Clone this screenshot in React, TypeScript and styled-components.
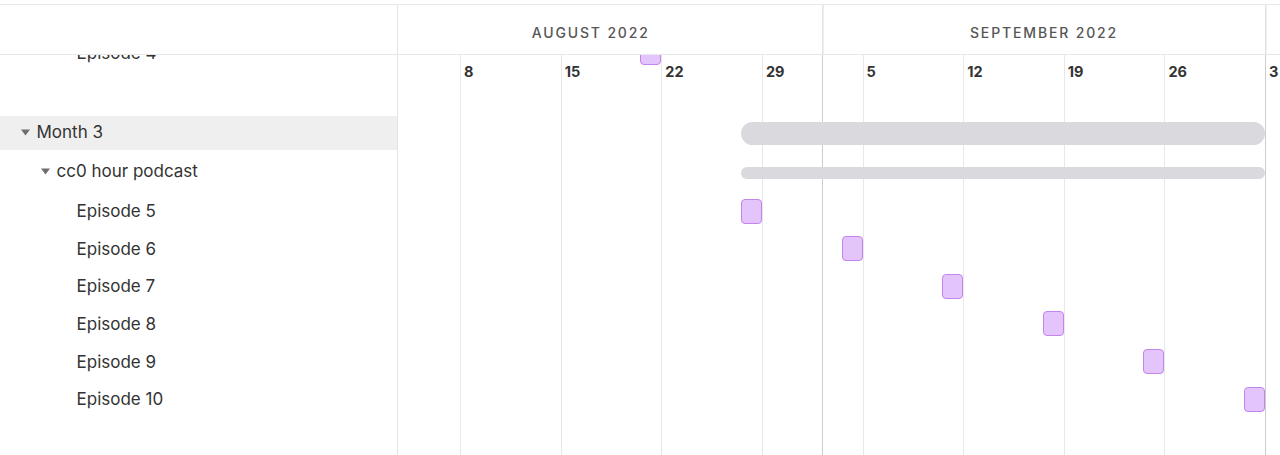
import React, { useLayoutEffect, useRef } from 'react';
import styled, { createGlobalStyle } from 'styled-components';

const GlobalStyle = createGlobalStyle`
  html, body { margin: 0; padding: 0; background: #ffffff; }
  body {
    font-family: Inter, "Noto Sans", sans-serif;
    color: #333333;
    overflow: hidden;
    -webkit-font-smoothing: antialiased;
  }
  * { box-sizing: border-box; }
`;

/* ---------- scale & data ---------- */
const DAY = 100.625 / 7;
const SIDEBAR_W = 398; // incl. 1px border
const SCROLL_X = 38.625; // canvas px hidden behind the sidebar
const SCROLL_Y = 210;
const VIEW_START = Date.UTC(2022, 7, 1);

const dayIdx = (m: number, d: number) =>
  Math.round((Date.UTC(2022, m - 1, d) - VIEW_START) / 86400000);
const xOf = (idx: number) => idx * DAY - SCROLL_X;

const MS_W = 21;
const MS_H = 25;

const GROUP_H = 36;
const PROJECT_H = 40;
const TASK_H = 37.6;
const GAP_H = 45;
const END_H = 80;

const months = [
  { label: 'AUGUST 2022', width: 463.625 },
  { label: 'SEPTEMBER 2022', width: 443 },
  { label: 'OCTOBER 2022', width: 460 },
];
const monthLines = [462.625, 905.625];

const weeks: { label: string; idx: number }[] = [];
for (let i = 0; i <= 10; i++) {
  const t = new Date(VIEW_START + i * 7 * 86400000);
  weeks.push({ label: String(t.getUTCDate()), idx: i * 7 });
}

type Kind = 'group' | 'project' | 'task' | 'gap';
interface GRow {
  kind: Kind;
  label?: string;
  level: number;
  start?: number;
  end?: number;
  at?: number;
}

const groups = [
  {
    label: 'Month 2',
    project: 'cc0 hour podcast',
    episodes: [
      { n: 1, d: dayIdx(8, 1) },
      { n: 2, d: dayIdx(8, 8) },
      { n: 3, d: dayIdx(8, 15) },
      { n: 4, d: dayIdx(8, 22) },
    ],
  },
  {
    label: 'Month 3',
    project: 'cc0 hour podcast',
    episodes: [
      { n: 5, d: dayIdx(8, 29) },
      { n: 6, d: dayIdx(9, 5) },
      { n: 7, d: dayIdx(9, 12) },
      { n: 8, d: dayIdx(9, 19) },
      { n: 9, d: dayIdx(9, 26) },
      { n: 10, d: dayIdx(10, 3) },
    ],
  },
];

const rows: GRow[] = [];
groups.forEach((g, gi) => {
  const first = xOf(g.episodes[0].d) - MS_W;
  const last = xOf(g.episodes[g.episodes.length - 1].d);
  rows.push({ kind: 'group', label: g.label, level: 0, start: first, end: last });
  rows.push({ kind: 'project', label: g.project, level: 1, start: first, end: last });
  g.episodes.forEach((e) =>
    rows.push({ kind: 'task', label: `Episode ${e.n}`, level: 2, at: xOf(e.d) })
  );
  rows.push({ kind: 'gap', level: gi === groups.length - 1 ? -1 : 0 });
});

const heightOf = (r: GRow) =>
  r.kind === 'group'
    ? GROUP_H
    : r.kind === 'project'
    ? PROJECT_H
    : r.kind === 'task'
    ? TASK_H
    : r.level === -1
    ? END_H
    : GAP_H;

/* ---------- styled parts ---------- */
const Page = styled.div`
  padding-top: 4px;
  height: 455px;
`;

const Gantt = styled.div`
  height: 451px;
  border-top: 1px solid #e7e7e7;
  display: flex;
  flex-direction: column;
`;

const Header = styled.div`
  display: flex;
  height: 50px;
  flex: none;
  border-bottom: 1px solid #e7e7e7;
`;

const SidebarHead = styled.div`
  width: ${SIDEBAR_W}px;
  flex: none;
  border-right: 1px solid #e4e4e4;
`;

const Viewport = styled.div`
  flex: 1;
  overflow: hidden;
  position: relative;
`;

const MonthStrip = styled.div`
  display: flex;
  height: 100%;
`;

const MonthCell = styled.div`
  flex: none;
  height: 100%;
  border-right: 1px solid #d2d2d2;
  display: flex;
  align-items: center;
  justify-content: center;
  padding-top: 5px;
  font-size: 14px;
  font-weight: 500;
  letter-spacing: 1.85px;
  color: #565656;
  white-space: nowrap;
`;

const BodyWrap = styled.div`
  flex: 1;
  min-height: 0;
  display: flex;
  position: relative;
`;

const Scroller = styled.div`
  flex: 1;
  overflow: hidden;
`;

const Content = styled.div`
  position: relative;
`;

const GridLayer = styled.div`
  position: absolute;
  top: 0;
  bottom: 0;
  left: ${SIDEBAR_W}px;
  right: 0;
  overflow: hidden;
  pointer-events: none;
`;

const VLine = styled.div<{ $strong?: boolean }>`
  position: absolute;
  top: 0;
  bottom: 0;
  width: 1px;
  background: ${(p) => (p.$strong ? '#cdcdcd' : '#e8e8e8')};
`;

const Row = styled.div`
  display: flex;
  position: relative;
  z-index: 1;
`;

const SideCell = styled.div<{ $level: number; $kind: Kind }>`
  width: ${SIDEBAR_W}px;
  flex: none;
  border-right: 1px solid #e4e4e4;
  display: flex;
  align-items: center;
  padding-left: ${(p) => 21 + Math.max(p.$level, 0) * 20}px;
  padding-bottom: ${(p) => (p.$kind === 'group' ? 5 : p.$kind === 'project' ? 3 : 0)}px;
  background: ${(p) =>
    p.$kind === 'group'
      ? 'linear-gradient(#efefef, #efefef) top left / 100% 34px no-repeat'
      : 'transparent'};
  font-size: 17px;
  color: #333333;
  white-space: nowrap;
`;

const Toggle = styled.span`
  width: 15.5px;
  flex: none;
  display: flex;
  align-items: center;
  padding-top: 2px;
`;

const Track = styled.div`
  flex: 1;
  position: relative;
`;

const Bar = styled.div<{ $thick?: boolean }>`
  position: absolute;
  top: ${(p) => (p.$thick ? 5.5 : 15)}px;
  height: ${(p) => (p.$thick ? 23 : 12)}px;
  border-radius: 12px;
  background: #d9d9de;
`;

const Milestone = styled.div`
  position: absolute;
  top: 50%;
  width: ${MS_W}px;
  height: ${MS_H}px;
  margin-top: -${MS_H / 2}px;
  border-radius: 4px;
  background: #e4c5fb;
  border: 1.5px solid #c384ee;
`;

const WeekLabels = styled.div`
  position: absolute;
  top: 0;
  left: ${SIDEBAR_W}px;
  right: 0;
  height: 34px;
  overflow: hidden;
  pointer-events: none;
  z-index: 2;
`;

const WeekLabel = styled.span`
  position: absolute;
  top: 0;
  line-height: 34px;
  font-size: 14.5px;
  font-weight: 700;
  color: #333333;
`;

const Caret = () => (
  <svg width="9" height="7" viewBox="0 0 9 7" aria-hidden>
    <polygon points="0,0.5 9,0.5 4.5,6.5" fill="#6e6e6e" />
  </svg>
);

export default function App() {
  const scroller = useRef<HTMLDivElement>(null);
  useLayoutEffect(() => {
    if (scroller.current) scroller.current.scrollTop = SCROLL_Y;
  }, []);

  return (
    <Page>
      <GlobalStyle />
      <Gantt>
        <Header>
          <SidebarHead />
          <Viewport>
            <MonthStrip style={{ transform: `translateX(${-SCROLL_X}px)` }}>
              {months.map((m) => (
                <MonthCell key={m.label} style={{ width: m.width }}>
                  {m.label}
                </MonthCell>
              ))}
            </MonthStrip>
          </Viewport>
        </Header>
        <BodyWrap>
          <Scroller ref={scroller}>
            <Content>
              <GridLayer>
                {weeks.map((w) => (
                  <VLine key={w.idx} style={{ left: xOf(w.idx) }} />
                ))}
                {monthLines.map((x) => (
                  <VLine key={x} $strong style={{ left: x - SCROLL_X }} />
                ))}
              </GridLayer>
              {rows.map((r, i) => (
                <Row key={i} style={{ height: heightOf(r) }}>
                  <SideCell $level={r.level} $kind={r.kind}>
                    {r.kind === 'group' || r.kind === 'project' ? (
                      <Toggle>
                        <Caret />
                      </Toggle>
                    ) : r.kind === 'task' ? (
                      <Toggle />
                    ) : null}
                    {r.label}
                  </SideCell>
                  <Track>
                    {(r.kind === 'group' || r.kind === 'project') && (
                      <Bar
                        $thick={r.kind === 'group'}
                        style={{ left: r.start, width: (r.end ?? 0) - (r.start ?? 0) }}
                      />
                    )}
                    {r.kind === 'task' && <Milestone style={{ left: (r.at ?? 0) - MS_W }} />}
                  </Track>
                </Row>
              ))}
            </Content>
          </Scroller>
          <WeekLabels>
            {weeks.map((w) => (
              <WeekLabel key={w.idx} style={{ left: xOf(w.idx) + 4 }}>
                {w.label}
              </WeekLabel>
            ))}
          </WeekLabels>
        </BodyWrap>
      </Gantt>
    </Page>
  );
}
